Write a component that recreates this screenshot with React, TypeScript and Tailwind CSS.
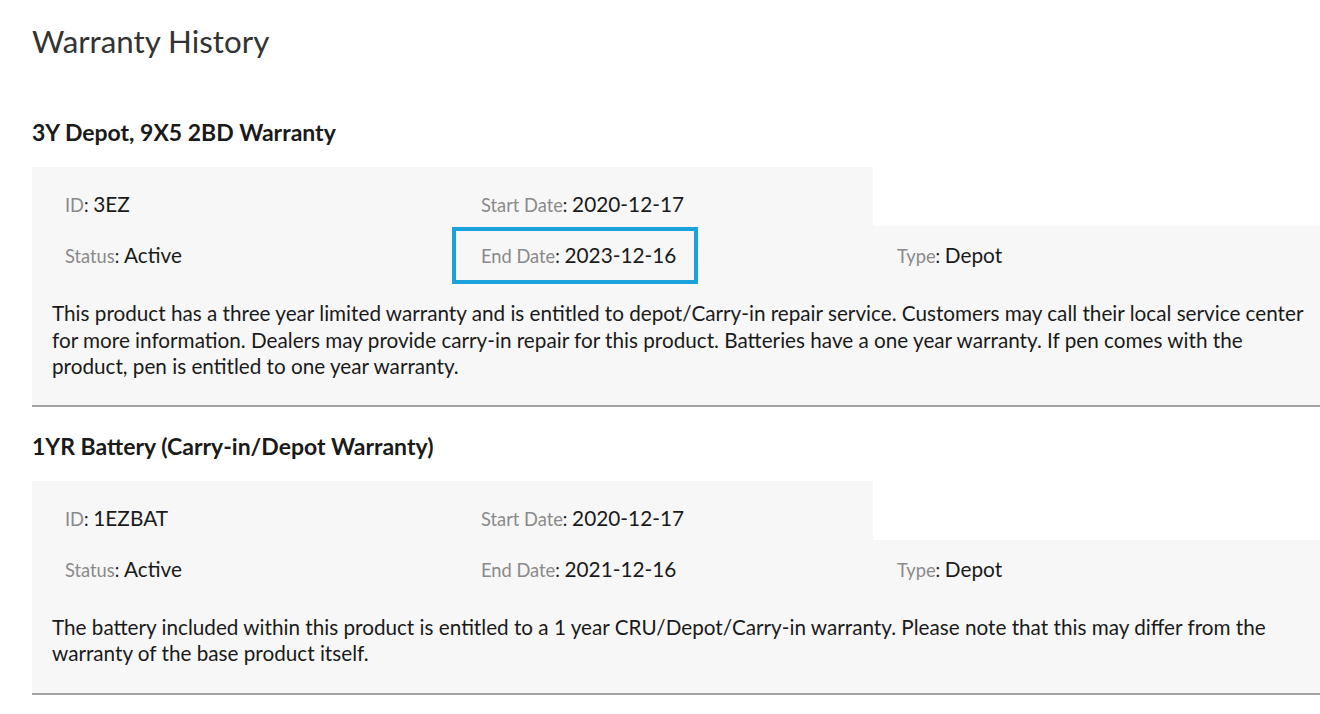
import React from "react";

type Field = { label: string; value: string; highlight?: boolean };

function FieldItem({ f }: { f: Field }) {
  return (
    <div className="w-[416px] pl-[33px] h-[24px] flex items-center">
      <div className="relative leading-[24px] whitespace-nowrap">
        <span className="text-[18.3px] text-[#8a8a8a]">{f.label}</span>
        <span className="text-[18.3px] text-[#1a1a1a]">: </span>
        <span className="text-[20.8px] text-[#1a1a1a]">{f.value}</span>
        {f.highlight && (
          <div className="absolute left-[-29px] top-[-16px] w-[246px] h-[57px] border-[4px] border-[#1ba1dc] pointer-events-none" />
        )}
      </div>
    </div>
  );
}

function Section({
  title,
  row1,
  row2,
  desc,
  pb,
}: {
  title: string;
  row1: Field[];
  row2: Field[];
  desc: string;
  pb: string;
}) {
  return (
    <section>
      <h2 className="text-[23px] font-bold text-[#1a1a1a] leading-[28px] h-[28px]">{title}</h2>
      <div className="mt-[21px]">
        <div className="w-[841px] bg-[#f7f7f7] pt-[26px] pb-[9px] flex">
          {row1.map((f) => (
            <FieldItem key={f.label} f={f} />
          ))}
        </div>
        <div className={`bg-[#f7f7f7] pt-[18px] border-b-2 border-[#a3a3a3] ${pb}`}>
          <div className="flex">
            {row2.map((f) => (
              <FieldItem key={f.label} f={f} />
            ))}
          </div>
          <p className="mt-[32px] pl-[20px] pr-[2px] text-[20.7px] leading-[26.5px] text-[#1a1a1a]">
            {desc}
          </p>
        </div>
      </div>
    </section>
  );
}

export default function App() {
  return (
    <div
      className="w-[1320px] h-[714px] bg-white overflow-hidden pl-[32px]"
      style={{ fontFamily: "Lato, 'Open Sans', sans-serif" }}
    >
      <h1 className="pt-[23px] text-[31.3px] leading-[36px] text-[#333333] font-normal">Warranty History</h1>
      <div className="mt-[59px]">
        <Section
          pb="pb-[25px]"
          title="3Y Depot, 9X5 2BD Warranty"
          row1={[
            { label: "ID", value: "3EZ" },
            { label: "Start Date", value: "2020-12-17" },
          ]}
          row2={[
            { label: "Status", value: "Active" },
            { label: "End Date", value: "2023-12-16", highlight: true },
            { label: "Type", value: "Depot" },
          ]}
          desc="This product has a three year limited warranty and is entitled to depot/Carry-in repair service. Customers may call their local service center for more information. Dealers may provide carry-in repair for this product. Batteries have a one year warranty. If pen comes with the product, pen is entitled to one year warranty."
        />
      </div>
      <div className="mt-[25px]">
        <Section
          pb="pb-[26px]"
          title="1YR Battery (Carry-in/Depot Warranty)"
          row1={[
            { label: "ID", value: "1EZBAT" },
            { label: "Start Date", value: "2020-12-17" },
          ]}
          row2={[
            { label: "Status", value: "Active" },
            { label: "End Date", value: "2021-12-16" },
            { label: "Type", value: "Depot" },
          ]}
          desc="The battery included within this product is entitled to a 1 year CRU/Depot/Carry-in warranty. Please note that this may differ from the warranty of the base product itself."
        />
      </div>
    </div>
  );
}
